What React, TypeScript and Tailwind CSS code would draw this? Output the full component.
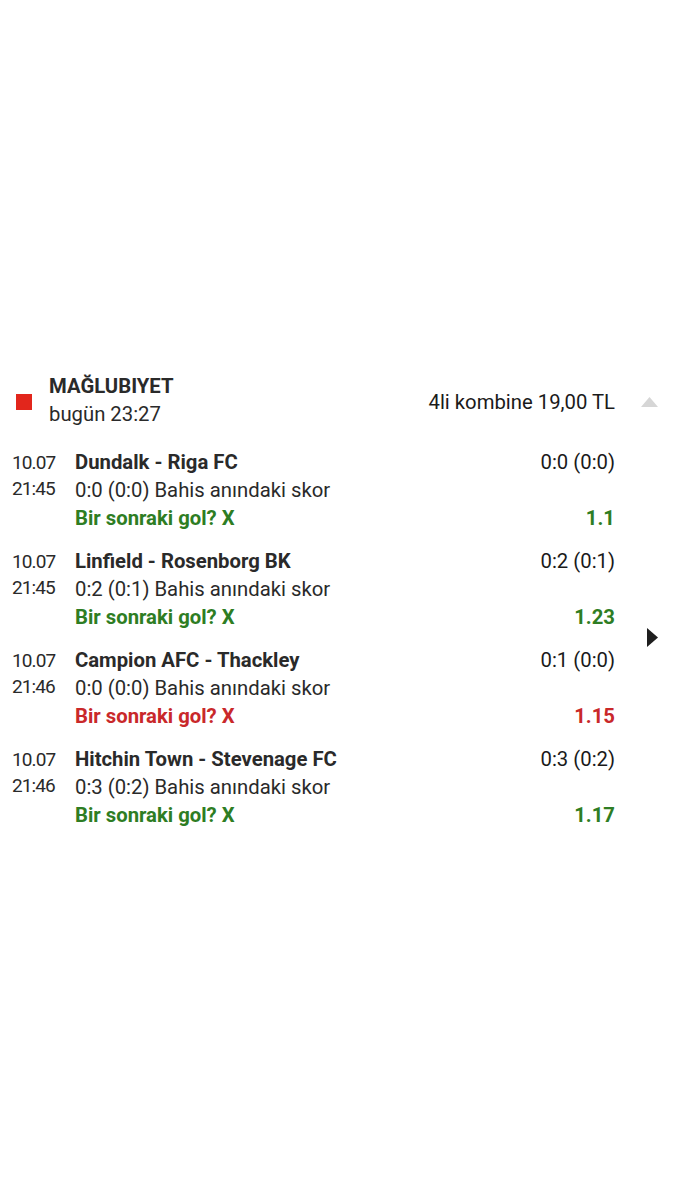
import React from "react";

type Row = {
  date: string;
  time: string;
  title: string;
  score: string;
  live: string;
  odd: string;
  lost?: boolean;
};

const rows: Row[] = [
  { date: "10.07", time: "21:45", title: "Dundalk - Riga FC", score: "0:0 (0:0)", live: "0:0 (0:0) Bahis anındaki skor", odd: "1.1" },
  { date: "10.07", time: "21:45", title: "Linfield - Rosenborg BK", score: "0:2 (0:1)", live: "0:2 (0:1) Bahis anındaki skor", odd: "1.23" },
  { date: "10.07", time: "21:46", title: "Campion AFC - Thackley", score: "0:1 (0:0)", live: "0:0 (0:0) Bahis anındaki skor", odd: "1.15", lost: true },
  { date: "10.07", time: "21:46", title: "Hitchin Town - Stevenage FC", score: "0:3 (0:2)", live: "0:3 (0:2) Bahis anındaki skor", odd: "1.17" },
];

export default function App() {
  return (
    <div
      className="relative w-[675px] h-[1200px] bg-white text-[#212121] text-[20.3px] leading-[28px]"
      style={{ fontFamily: "Roboto, 'Noto Sans', sans-serif" }}
    >
      <div className="pt-[372px] pl-[12px]">
        {/* header */}
        <div className="flex items-center">
          <div className="w-[37px] flex items-center pl-[4px]">
            <div className="w-[16px] h-[16px] bg-[#e2261c] mt-[3px]" />
          </div>
          <div className="flex-1 flex flex-col">
            <span className="font-bold text-[#2a2a2a]">MAĞLUBIYET</span>
            <span className="text-[#2a2a2a]">bugün 23:27</span>
          </div>
          <div className="mt-[3px] text-[#1a1a1a]">4li kombine 19,00 TL</div>
          <div className="w-[60px] flex justify-end pr-[17px] mt-[3px]">
            <svg width="17" height="10" viewBox="0 0 17 10">
              <polygon points="8.5,0 17,10 0,10" fill="#d6d6d6" />
            </svg>
          </div>
        </div>

        <div className="mt-[20px] flex flex-col gap-[15px]">
          {rows.map((r, i) => (
            <div key={i} className="flex">
              <div className="w-[63px] flex flex-col text-[19px] tracking-[-0.9px] text-[#2a2a2a] leading-[26px] pt-[2px]">
                <span>{r.date}</span>
                <span>{r.time}</span>
              </div>
              <div className="flex-1 flex flex-col">
                <div className="flex justify-between">
                  <span className="font-bold text-[#2a2a2a]">{r.title}</span>
                  <span className="text-[#1a1a1a]">{r.score}</span>
                </div>
                <div className="text-[#2a2a2a]">{r.live}</div>
                <div className={"flex justify-between font-bold " + (r.lost ? "text-[#c9282a]" : "text-[#2e7d23]")}>
                  <span>Bir sonraki gol? X</span>
                  <span>{r.odd}</span>
                </div>
              </div>
              <div className="w-[60px]" />
            </div>
          ))}
        </div>
      </div>

      <svg className="absolute left-[647px] top-[628px]" width="11" height="19" viewBox="0 0 11 19">
        <polygon points="0,0 11,9.5 0,19" fill="#1e1e1e" />
      </svg>
    </div>
  );
}
